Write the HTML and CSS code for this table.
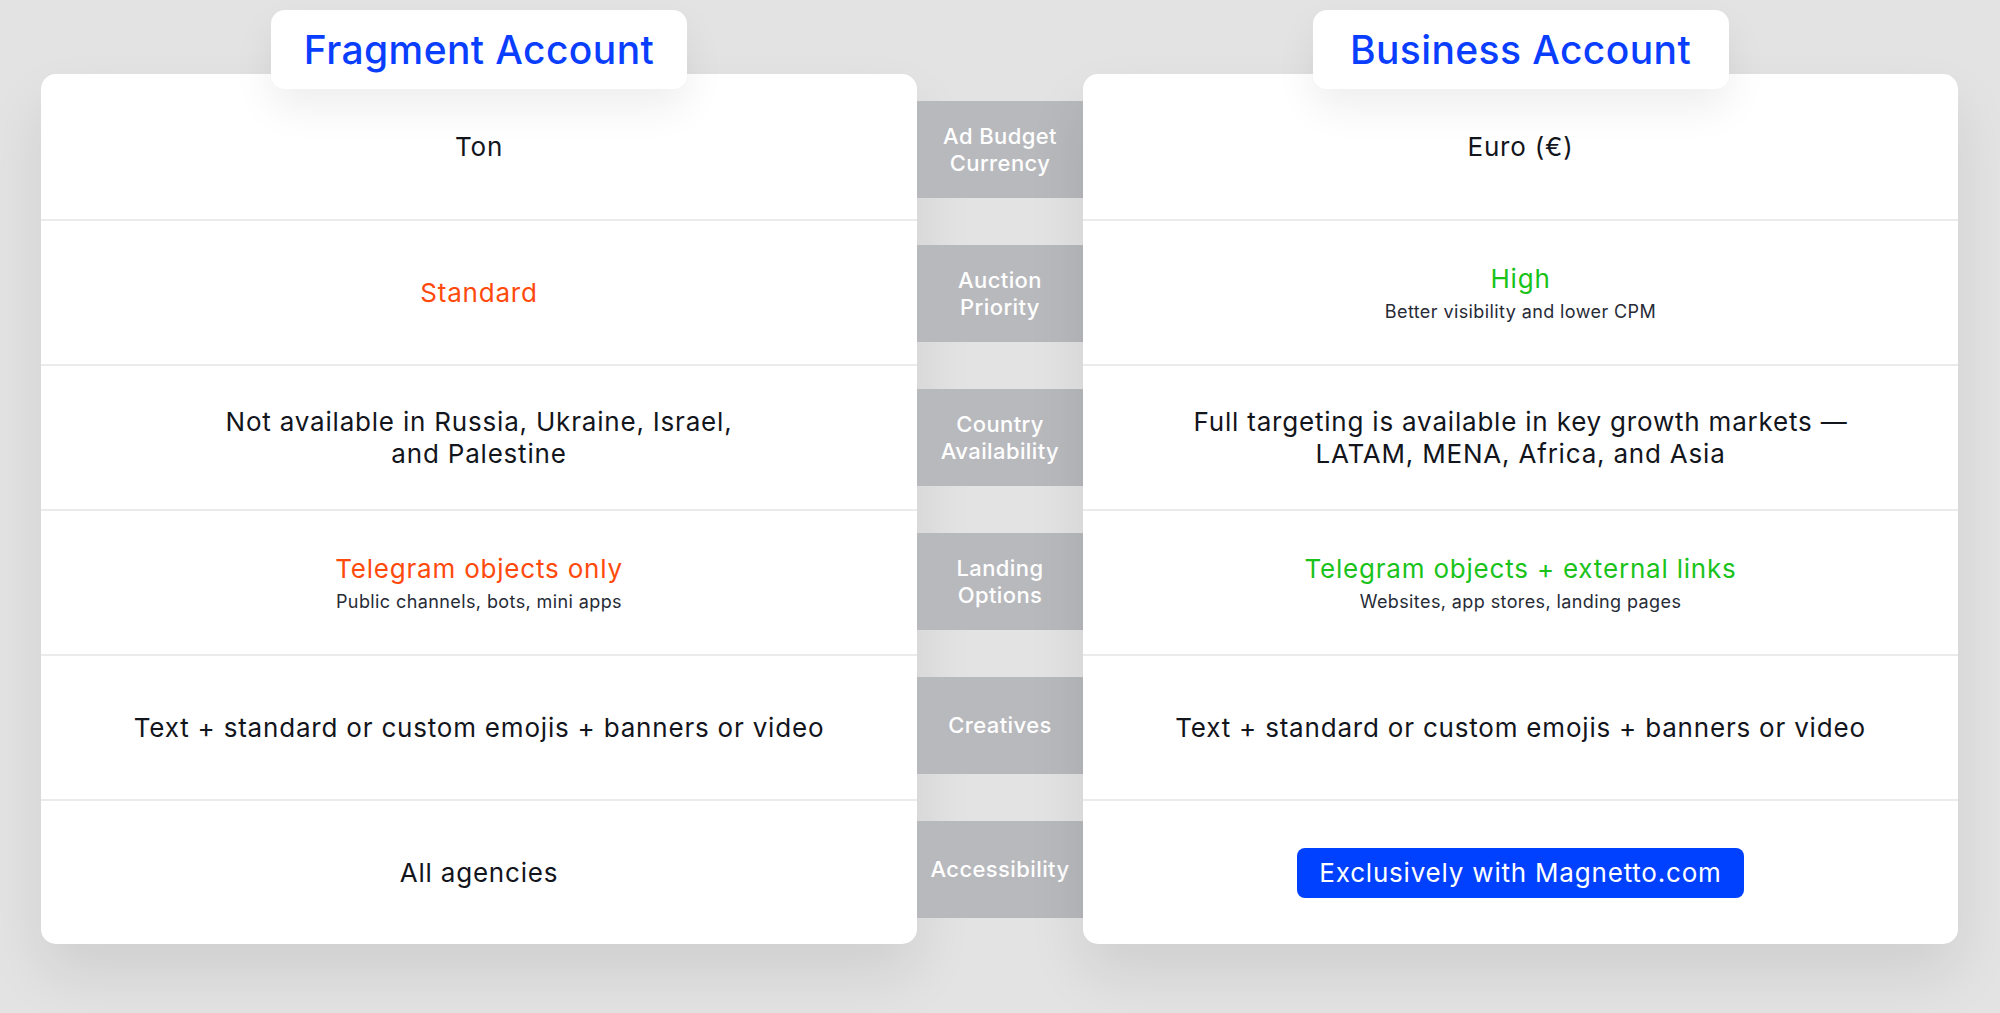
FILE: index.html
```html
<!DOCTYPE html>
<html lang="en">
<head>
    <meta charset="UTF-8">
    <meta name="viewport" content="width=device-width, initial-scale=1.0">
    <title>Fragment vs Business Account</title>
    <link rel="stylesheet" href="styles.css">
</head>
<body>
    <div class="compare">
        <!-- Fragment -->
        <div class="col">
            <div class="tab">Fragment Account</div>
            <div class="card">
                <div class="row"><div class="value">Ton</div></div>
                <div class="row"><div class="value orange">Standard</div></div>
                <div class="row"><div class="value">Not available in Russia, Ukraine, Israel,<br>and Palestine</div></div>
                <div class="row">
                    <div class="value orange">Telegram objects only</div>
                    <div class="sub">Public channels, bots, mini apps</div>
                </div>
                <div class="row"><div class="value">Text + standard or custom emojis + banners or video</div></div>
                <div class="row"><div class="value">All agencies</div></div>
            </div>
        </div>

        <!-- Labels -->
        <div class="labels">
            <div class="label">Ad Budget<br>Currency</div>
            <div class="label">Auction<br>Priority</div>
            <div class="label">Country<br>Availability</div>
            <div class="label">Landing<br>Options</div>
            <div class="label">Creatives</div>
            <div class="label">Accessibility</div>
        </div>

        <!-- Business -->
        <div class="col">
            <div class="tab">Business Account</div>
            <div class="card">
                <div class="row"><div class="value">Euro (€)</div></div>
                <div class="row">
                    <div class="value green">High</div>
                    <div class="sub">Better visibility and lower CPM</div>
                </div>
                <div class="row"><div class="value">Full targeting is available in key growth markets —<br>LATAM, MENA, Africa, and Asia</div></div>
                <div class="row">
                    <div class="value green">Telegram objects + external links</div>
                    <div class="sub">Websites, app stores, landing pages</div>
                </div>
                <div class="row"><div class="value">Text + standard or custom emojis + banners or video</div></div>
                <div class="row"><a href="#" class="btn">Exclusively with Magnetto.com</a></div>
            </div>
        </div>
    </div>
</body>
</html>
```

FILE: styles.css
```css
html, body {
    margin: 0;
    min-height: 100vh;
    background-color: #e3e3e3;
}

body {
    font-family: Inter, "Noto Sans", sans-serif;
    color: #13151c;
}

.compare {
    display: grid;
    grid-template-columns: 876px 166px 875px;
    padding-left: 41px;
    padding-top: 10px;
    padding-bottom: 60px;
}

.col {
    display: flex;
    flex-direction: column;
    align-items: center;
}

.tab {
    position: relative;
    z-index: 1;
    height: 79px;
    width: 416px;
    margin-bottom: -15px;
    display: flex;
    align-items: center;
    justify-content: center;
    background: white;
    border-radius: 14px;
    box-shadow: 0 18px 40px rgba(0, 0, 0, 0.07);
    color: #0a3eff;
    font-size: 39px;
    font-weight: 500;
    letter-spacing: 0.4px;
}

.card {
    align-self: stretch;
    background: white;
    border-radius: 15px;
    box-shadow: 0 30px 60px rgba(0, 0, 0, 0.09);
}

.row {
    height: 145px;
    box-sizing: border-box;
    display: flex;
    flex-direction: column;
    align-items: center;
    justify-content: center;
    text-align: center;
}

.row + .row {
    border-top: 2px solid #ebebeb;
}

.value {
    font-size: 26px;
    line-height: 32px;
    letter-spacing: 0.8px;
}

.orange {
    color: #ff4a0c;
}

.green {
    color: #1ac31a;
}

.sub {
    font-size: 18px;
    line-height: 22px;
    letter-spacing: 0.4px;
    margin-top: 6px;
    color: #272b36;
}

.labels {
    display: flex;
    flex-direction: column;
    gap: 47px;
    padding-top: 91px;
}

.label {
    height: 97px;
    display: flex;
    align-items: center;
    justify-content: center;
    text-align: center;
    background: #b8b9bd;
    color: white;
    font-size: 22px;
    line-height: 27px;
    letter-spacing: 0.4px;
    font-weight: 500;
}

.btn {
    display: block;
    width: 447px;
    height: 50px;
    box-sizing: border-box;
    line-height: 50px;
    background: #0041ff;
    color: white;
    text-decoration: none;
    text-align: center;
    border-radius: 8px;
    font-size: 26px;
    letter-spacing: 0.8px;
}
```
